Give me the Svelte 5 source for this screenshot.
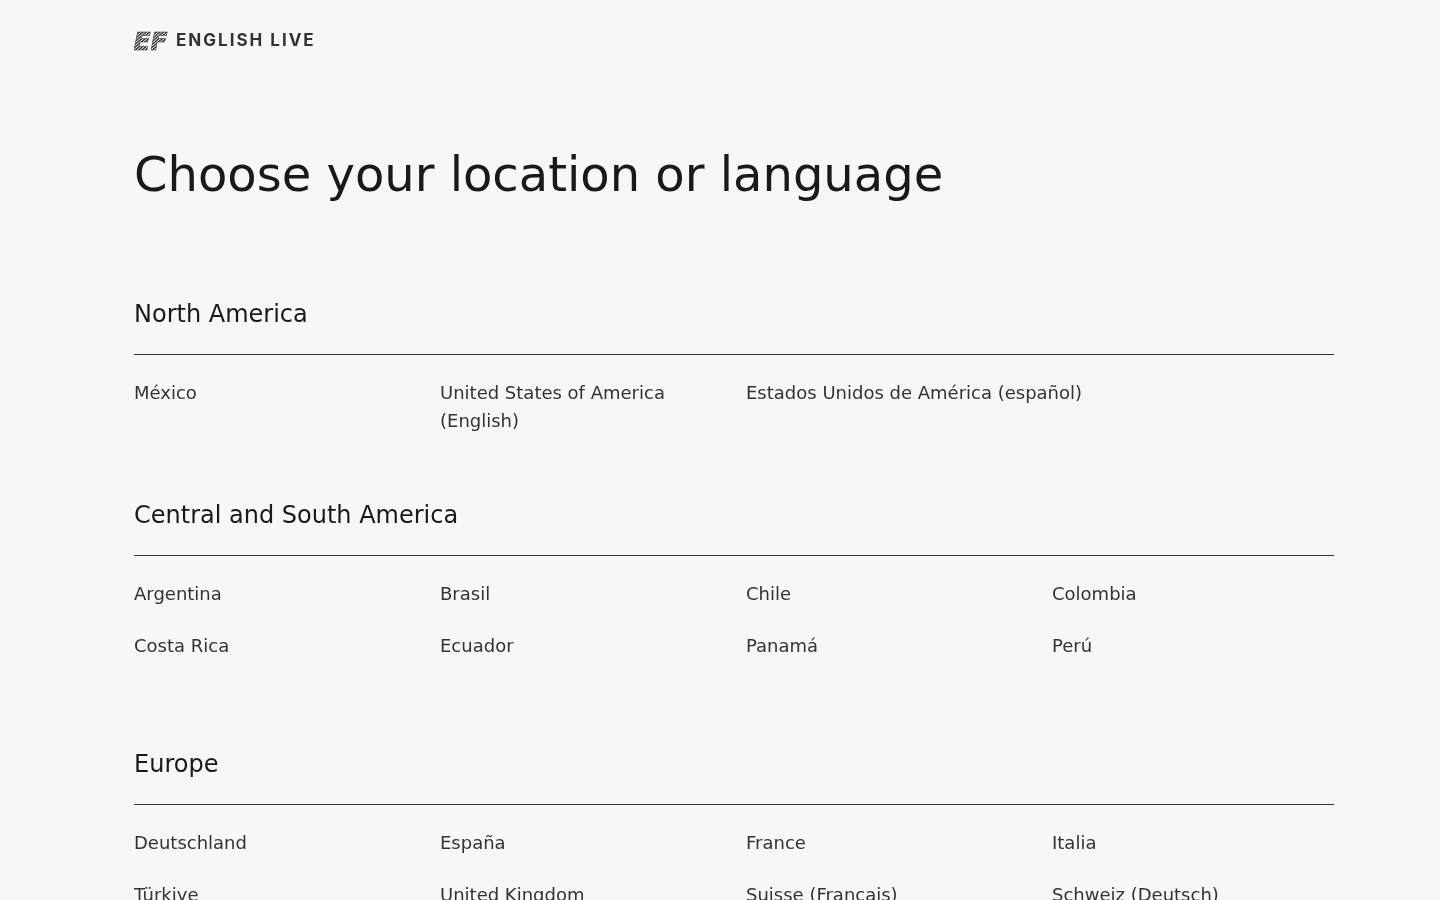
<script>
	const regions = [
		{
			name: 'North America',
			places: [
				{ label: 'México' },
				{ label: 'United States of America (English)' },
				{ label: 'Estados Unidos de América (español)', wide: true }
			]
		},
		{
			name: 'Central and South America',
			places: [
				{ label: 'Argentina' },
				{ label: 'Brasil' },
				{ label: 'Chile' },
				{ label: 'Colombia' },
				{ label: 'Costa Rica' },
				{ label: 'Ecuador' },
				{ label: 'Panamá' },
				{ label: 'Perú' }
			]
		},
		{
			name: 'Europe',
			places: [
				{ label: 'Deutschland' },
				{ label: 'España' },
				{ label: 'France' },
				{ label: 'Italia' },
				{ label: 'Türkiye' },
				{ label: 'United Kingdom' },
				{ label: 'Suisse (Français)' },
				{ label: 'Schweiz (Deutsch)' }
			]
		}
	];
</script>

<div class="page">
	<header class="logo">
		<svg class="ef" width="34" height="22" viewBox="0 0 34 22" aria-hidden="true">
			<defs>
				<pattern id="stripes" width="2.2" height="2.2" patternUnits="userSpaceOnUse" patternTransform="rotate(-40)">
					<rect width="2.2" height="2.2" fill="#f7f7f7" />
					<rect width="2.2" height="1.3" fill="#2b2b2b" />
				</pattern>
			</defs>
			<text x="-0.5" y="20" class="ef-text" fill="url(#stripes)">EF</text>
		</svg>
		<span class="wordmark">ENGLISH LIVE</span>
	</header>

	<h1>Choose your location or language</h1>

	{#each regions as region}
		<section>
			<h2>{region.name}</h2>
			<ul>
				{#each region.places as place}
					<li class:wide={place.wide}><a href="#top">{place.label}</a></li>
				{/each}
			</ul>
		</section>
	{/each}
</div>

<style>
	:global(body) {
		background: #f7f7f7;
		overflow: hidden;
	}

	.page {
		width: 1200px;
		margin-left: 134px;
		font-family: 'DejaVu Sans', sans-serif;
		color: #191919;
		will-change: transform;
	}

	.logo {
		display: flex;
		align-items: center;
		gap: 8px;
		height: 22px;
		padding-top: 30px;
	}

	.ef {
		flex: none;
	}

	.ef-text {
		font-family: 'DejaVu Sans', sans-serif;
		font-size: 25px;
		font-weight: 700;
		font-style: italic;
		stroke: #2b2b2b;
		stroke-width: 0.5px;
	}

	.wordmark {
		margin-bottom: 2px;
		font-family: 'Inter', sans-serif;
		font-size: 17px;
		font-weight: 700;
		letter-spacing: 2px;
		color: #333;
	}

	h1 {
		margin: 0;
		padding: 92px 0 94px;
		font-size: 48px;
		line-height: 60px;
		font-weight: 400;
	}

	section {
		margin-bottom: 64px;
	}

	h2 {
		margin: 0;
		padding-bottom: 24px;
		font-size: 24px;
		line-height: 32px;
		font-weight: 400;
		border-bottom: 1px solid #333;
	}

	ul {
		display: grid;
		grid-template-columns: repeat(4, 1fr);
		column-gap: 24px;
		margin: 0;
		padding: 24px 0 0;
		list-style: none;
	}

	li {
		min-height: 52px;
		font-size: 18px;
		line-height: 28px;
	}

	li.wide {
		grid-column: span 2;
	}

	a {
		color: #333;
		text-decoration: none;
	}
</style>
